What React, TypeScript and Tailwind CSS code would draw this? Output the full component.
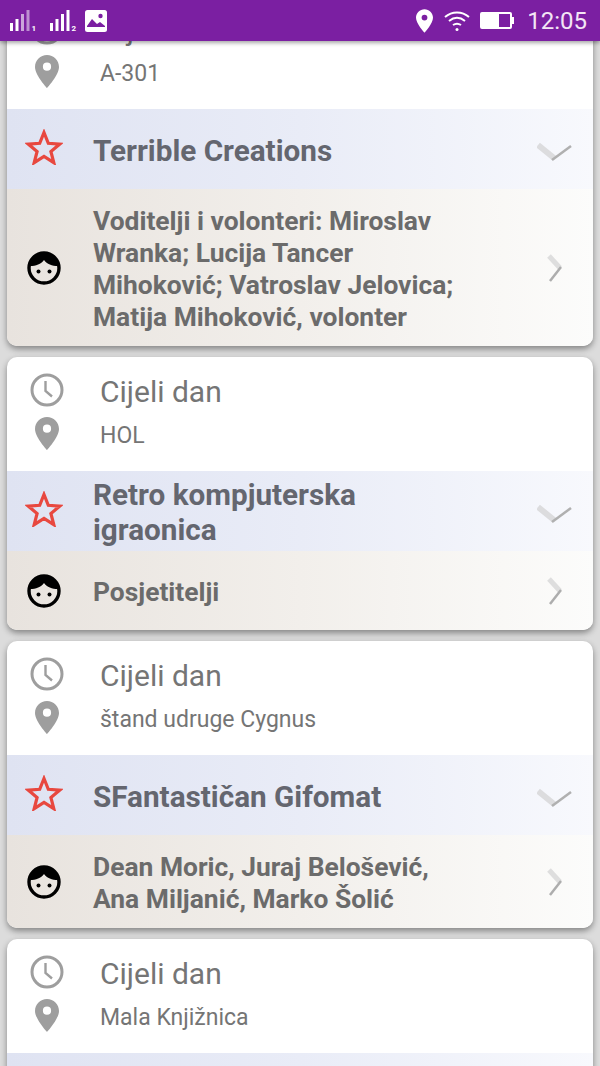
import React from 'react';

const Pin = ({ className }: { className: string }) => (
  <svg viewBox="0 0 24 33" className={className} fill="currentColor">
    <path fillRule="evenodd" d="M12 0C5.4 0 0 5.3 0 11.900 0 20 12 33 12 33s12-13 12-21.100C24 5.300 18.600 0 12 0zm0 15.800a4.100 4.100 0 1 1 0-8.200 4.100 4.100 0 0 1 0 8.200z" />
  </svg>
);

const Clock = () => (
  <svg viewBox="0 0 34 34" className="h-[34px] w-[34px] text-[#9e9e9e]" fill="none" stroke="currentColor">
    <circle cx="17" cy="17" r="15" strokeWidth="3" />
    <path d="M15.500 8V18l6.500 5.500" strokeWidth="2.400" />
  </svg>
);

const Star = () => (
  <svg viewBox="0 0 38 36" className="h-[36px] w-[38px] text-[#e8483f]" fill="none" stroke="currentColor" strokeWidth="3.200">
    <path d="M19 3.500l4.300 10.800 11.500.8-8.900 7.400 2.900 11.200L19 27.500l-9.800 6.200 2.900-11.200-8.900-7.400 11.500-.8z" />
  </svg>
);

const Face = () => (
  <svg viewBox="0 0 34 34" className="h-[34px] w-[34px]">
    <circle cx="17" cy="17" r="15" fill="none" stroke="#000" strokeWidth="3.400" />
    <path d="M3 15C4 7 10 2 17 2s13 5 14 13c-6 0-11-2-14-6-3 4-8 6-14 6z" fill="#000" />
    <circle cx="11.500" cy="20.500" r="2" fill="#000" />
    <circle cx="22.500" cy="20.500" r="2" fill="#000" />
  </svg>
);

const ChevronDown = () => (
  <svg viewBox="0 0 36 22" className="h-[22px] w-[36px]" fill="none">
    <path d="M1 3l16 13" stroke="#dcdcde" strokeWidth="6" />
    <path d="M15 18L34 4" stroke="#b0b0b0" strokeWidth="2.500" />
  </svg>
);

const ChevronRight = () => (
  <svg viewBox="0 0 16 30" className="h-[30px] w-[16px]" fill="none">
    <path d="M2 3l11 12" stroke="#dedede" strokeWidth="5" />
    <path d="M14 14L3 28" stroke="#adadad" strokeWidth="2.500" />
  </svg>
);

type Event = {
  location: string;
  title: string;
  people?: string;
};

const events: Event[] = [
  {
    location: 'A-301',
    title: 'Terrible Creations',
    people: 'Voditelji i volonteri: Miroslav Wranka; Lucija Tancer Mihoković; Vatroslav Jelovica; Matija Mihoković, volonter',
  },
  { location: 'HOL', title: 'Retro kompjuterska igraonica', people: 'Posjetitelji' },
  { location: 'štand udruge Cygnus', title: 'SFantastičan Gifomat', people: 'Dean Moric, Juraj Belošević, Ana Miljanić, Marko Šolić' },
  { location: 'Mala Knjižnica', title: '' },
];

const EventCard = ({ event }: { event: Event }) => (
  <div className="shrink-0 overflow-hidden rounded-[10px] bg-white shadow-[0_3px_6px_rgba(0,0,0,0.4)]">
    <div className="h-[114px] pt-[14px]">
      <div className="flex h-[38px] items-center">
        <div className="flex w-[80px] justify-center">
          <Clock />
        </div>
        <span className="translate-y-[1.500px] pl-[13px] text-[30px] leading-[38px] text-[#757575]">Cijeli dan</span>
      </div>
      <div className="mt-[5px] flex h-[40px] items-center">
        <div className="flex w-[80px] justify-center">
          <Pin className="h-[33px] w-[24px] -translate-y-px text-[#9e9e9e]" />
        </div>
        <span className="translate-y-[2px] pl-[13px] text-[23px] leading-[28px] text-[#757575]">{event.location}</span>
      </div>
    </div>
    <div className="flex h-[80px] items-center bg-gradient-to-r from-[#dfe3f2] via-[#e9ecf7] to-[#f8f9fd]">
      <div className="flex w-[73px] shrink-0 -translate-y-[2px] justify-center">
        <Star />
      </div>
      <div className="ml-[13px] w-[360px] translate-y-[1px] text-[29.700px] leading-[35px] font-bold text-[#64666f]">{event.title}</div>
      <div className="ml-auto mr-[20px] translate-y-[4px]">
        <ChevronDown />
      </div>
    </div>
    {event.people && (
      <div className="flex min-h-[79px] items-center bg-gradient-to-r from-[#e8e3de] via-[#f2efeb] to-[#fcfcfb] py-[14.500px]">
        <div className="flex w-[73px] shrink-0 justify-center">
          <Face />
        </div>
        <div className="ml-[13px] w-[370px] translate-y-[1px] text-[26.400px] leading-[32px] font-bold text-[#6b6b6b]">{event.people}</div>
        <div className="ml-auto mr-[30px]">
          <ChevronRight />
        </div>
      </div>
    )}
  </div>
);

const SignalIcon = ({ digit, dim, className }: { digit: string; dim?: boolean; className?: string }) => (
  <svg viewBox="0 0 28 22" className={`h-[22px] w-[28px] ${className ?? ''}`} fill="#fff">
    <rect x="0" y="13" width="3" height="8" />
    <rect x="5.500" y="9" width="3" height="12" />
    <rect x="11" y="4" width="3" height="17" opacity={dim ? 0.6 : 1} />
    <rect x="16.500" y="0" width="3" height="21" opacity={dim ? 0.5 : 1} />
    <text x="21.500" y="21" fontSize="8" fontWeight="700" fontFamily="Roboto, sans-serif">
      {digit}
    </text>
  </svg>
);

const StatusBar = () => (
  <div className="relative z-10 flex h-[41px] items-center justify-between bg-[#7b1fa2] pl-[10px] pr-[13px] shadow-[0_2px_4px_rgba(0,0,0,0.35)]">
    <div className="flex items-center">
      <SignalIcon digit="1" dim />
      <SignalIcon digit="2" className="ml-[12px]" />
      <svg viewBox="0 0 22 22" className="ml-[7px] h-[22px] w-[22px]">
        <rect width="22" height="22" rx="2.500" fill="#fff" />
        <circle cx="15.500" cy="6" r="2.200" fill="#7b1fa2" />
        <path d="M2 16l5-7 5 5 3-2 5 4v1H2z" fill="#7b1fa2" />
      </svg>
    </div>
    <div className="flex items-center">
      <Pin className="h-[24px] w-[17px] text-white" />
      <svg viewBox="0 0 26 22" className="ml-[11px] h-[22px] w-[26px]" fill="none" stroke="#fff" strokeWidth="2">
        <path d="M1 7c7-6 17-6 24 0" />
        <path d="M5 11c5-4 11-4 16 0" />
        <path d="M9 15c3-2 5-2 8 0" />
        <circle cx="13" cy="19.500" r="1.500" fill="#fff" stroke="none" />
      </svg>
      <div className="ml-[10px] flex items-center">
        <div className="h-[17px] w-[32px] rounded-[2px] border-2 border-white">
          <div className="h-full w-[17px] bg-white" />
        </div>
        <div className="h-[7px] w-[2px] bg-white" />
      </div>
      <span className="ml-[13px] text-[24px] leading-none text-[#f3e5f5]">12:05</span>
    </div>
  </div>
);

const App: React.FC = () => {
  return (
    <div className="h-[1066px] w-[600px] overflow-hidden bg-[#dcdcdc] font-['Roboto',sans-serif]">
      <StatusBar />
      <div className="-mt-[46px] flex flex-col gap-[11px] px-[7px]">
        {events.map((event) => (
          <EventCard key={event.location} event={event} />
        ))}
      </div>
    </div>
  );
};

export default App;
